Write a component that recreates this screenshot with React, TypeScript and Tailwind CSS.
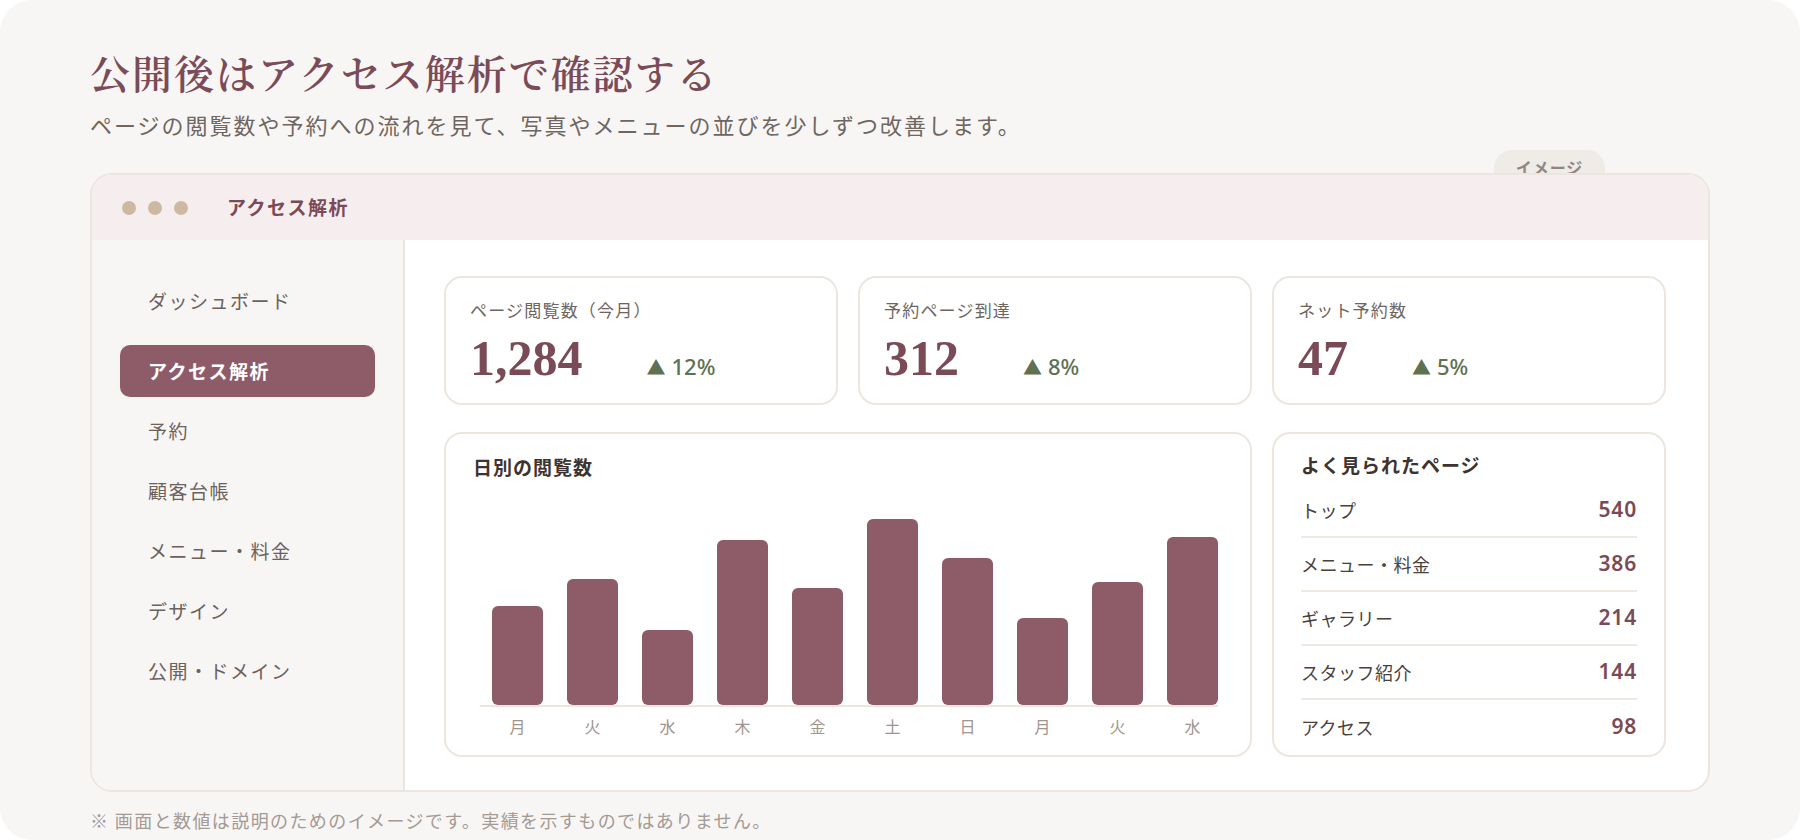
import React from 'react';

const stats = [
  { label: 'ページ閲覧数（今月）', value: '1,284', delta: '12%' },
  { label: '予約ページ到達', value: '312', delta: '8%' },
  { label: 'ネット予約数', value: '47', delta: '5%' },
];

const days = [
  { d: '月', h: 99 },
  { d: '火', h: 126 },
  { d: '水', h: 75 },
  { d: '木', h: 165 },
  { d: '金', h: 117 },
  { d: '土', h: 186 },
  { d: '日', h: 147 },
  { d: '月', h: 87 },
  { d: '火', h: 123 },
  { d: '水', h: 168 },
];

const pages = [
  { name: 'トップ', count: 540 },
  { name: 'メニュー・料金', count: 386 },
  { name: 'ギャラリー', count: 214 },
  { name: 'スタッフ紹介', count: 144 },
  { name: 'アクセス', count: 98 },
];

const navItems = ['ダッシュボード', 'アクセス解析', '予約', '顧客台帳', 'メニュー・料金', 'デザイン', '公開・ドメイン'];

const StatCard: React.FC<{ label: string; value: string; delta: string }> = ({ label, value, delta }) => (
  <div className="h-[129px] rounded-[18px] border-2 border-[#ede6e0] bg-white px-[24px] pt-[19px]">
    <div className="text-[17px] leading-[26px] tracking-[1.2px] text-[#6e6560]">{label}</div>
    <div className="mt-[10px] flex items-baseline">
      <span className="font-['Liberation_Serif',serif] text-[50px] font-bold leading-none text-[#7a4a57]">{value}</span>
      <span className="ml-[64px] flex items-baseline text-[#5e7151]">
        <span className="text-[19px]">▲</span>
        <span className="ml-[6px] font-['Noto_Sans',sans-serif] text-[22px] font-medium">{delta}</span>
      </span>
    </div>
  </div>
);

export default function App() {
  return (
    <div className="h-[840px] w-[1800px] bg-white font-['Noto_Sans_CJK_JP',sans-serif]">
      <div className="h-full rounded-[32px] bg-[#f8f6f4] px-[90px] pt-[48px]">
        {/* Heading */}
        <h1 className="font-['Noto_Serif_CJK_JP','Noto_Sans_CJK_JP',serif] text-[40px] font-semibold leading-[48px] tracking-[2px] text-[#7a4b58]">
          公開後はアクセス解析で確認する
        </h1>
        <p className="mt-[12px] text-[22px] leading-[32px] tracking-[2px] text-[#6e6661]">
          ページの閲覧数や予約への流れを見て、写真やメニューの並びを少しずつ改善します。
        </p>

        {/* Window */}
        <div className="relative mt-[33px] w-[1620px]">
          <div className="absolute -top-[23px] right-[105px] z-0 flex h-[44px] w-[111px] justify-center rounded-[18px] bg-[#efebe7] pt-[5px] text-[16px] font-bold leading-[24px] tracking-[1px] text-[#8f8782]">
            イメージ
          </div>
          <div className="relative z-10 h-[619px] overflow-hidden rounded-[22px] border-2 border-[#ede5df] bg-white">
            <div className="flex h-[65px] items-center bg-[#f6edee] pl-[30px]">
              <div className="flex gap-[12px]">
                <span className="h-[14px] w-[14px] rounded-full bg-[#cdb9a3]" />
                <span className="h-[14px] w-[14px] rounded-full bg-[#cdb9a3]" />
                <span className="h-[14px] w-[14px] rounded-full bg-[#cdb9a3]" />
              </div>
              <span className="ml-[39px] text-[19px] font-bold tracking-[1.5px] text-[#7a4a58]">アクセス解析</span>
            </div>

            <div className="flex h-[550px]">
              {/* Sidebar */}
              <nav className="w-[313px] shrink-0 border-r-2 border-[#ede5df] bg-[#f8f6f4] px-[28px] pt-[35px]">
                <ul className="flex flex-col gap-[8px]">
                  {navItems.map((item, i) => (
                    <li
                      key={item}
                      className={`flex h-[52px] items-center rounded-[10px] px-[28px] text-[19px] tracking-[1.5px] ${
                        i === 1 ? 'bg-[#8e5c68] font-bold text-white' : 'text-[#6b625e]'
                      } ${i === 0 ? 'mb-[10px]' : ''}`}
                    >
                      {item}
                    </li>
                  ))}
                </ul>
              </nav>

              {/* Main */}
              <main className="flex-1 pl-[39px] pt-[36px]">
                <div className="grid grid-cols-[394px_394px_394px] gap-x-[20px] gap-y-[27px]">
                  {stats.map((s) => (
                    <StatCard key={s.label} {...s} />
                  ))}

                  {/* Daily views chart */}
                  <div className="col-span-2 h-[325px] rounded-[18px] border-2 border-[#ede6e0] bg-white px-[27px] pt-[19px]">
                    <div className="text-[19px] font-bold leading-[28px] tracking-[1px] text-[#3d3431]">日別の閲覧数</div>
                    <div className="ml-[7px] w-[738px]">
                      <div className="flex h-[226px] items-end gap-[24px] border-b-2 border-[#ede6e0] pl-[12px]">
                        {days.map((b, i) => (
                          <div key={i} className="w-[51px] rounded-[6px] bg-[#8e5c68]" style={{ height: b.h }} />
                        ))}
                      </div>
                      <div className="mt-[8px] flex gap-[24px] pl-[12px]">
                        {days.map((b, i) => (
                          <div key={i} className="w-[51px] text-center text-[16px] leading-[22px] text-[#a0958e]">
                            {b.d}
                          </div>
                        ))}
                      </div>
                    </div>
                  </div>

                  {/* Top pages */}
                  <div className="h-[325px] rounded-[18px] border-2 border-[#ede6e0] bg-white px-[27px] pt-[17px]">
                    <div className="text-[19px] font-bold leading-[28px] tracking-[1px] text-[#3d3431]">よく見られたページ</div>
                    <ul className="mt-[5px]">
                      {pages.map((p, i) => (
                        <li
                          key={p.name}
                          className={`flex h-[54px] items-center justify-between ${
                            i < pages.length - 1 ? 'border-b-2 border-[#efe9e4]' : ''
                          }`}
                        >
                          <span className="text-[18px] tracking-[0.5px] text-[#4a413d]">{p.name}</span>
                          <span className="font-['Noto_Sans',sans-serif] text-[21px] font-semibold tracking-[0.8px] text-[#7a4a57]">
                            {p.count}
                          </span>
                        </li>
                      ))}
                    </ul>
                  </div>
                </div>
              </main>
            </div>
          </div>
        </div>

        <p className="mt-[15px] text-[18px] leading-[26px] tracking-[1.4px] text-[#a39a94]">
          ※ 画面と数値は説明のためのイメージです。実績を示すものではありません。
        </p>
      </div>
    </div>
  );
}
